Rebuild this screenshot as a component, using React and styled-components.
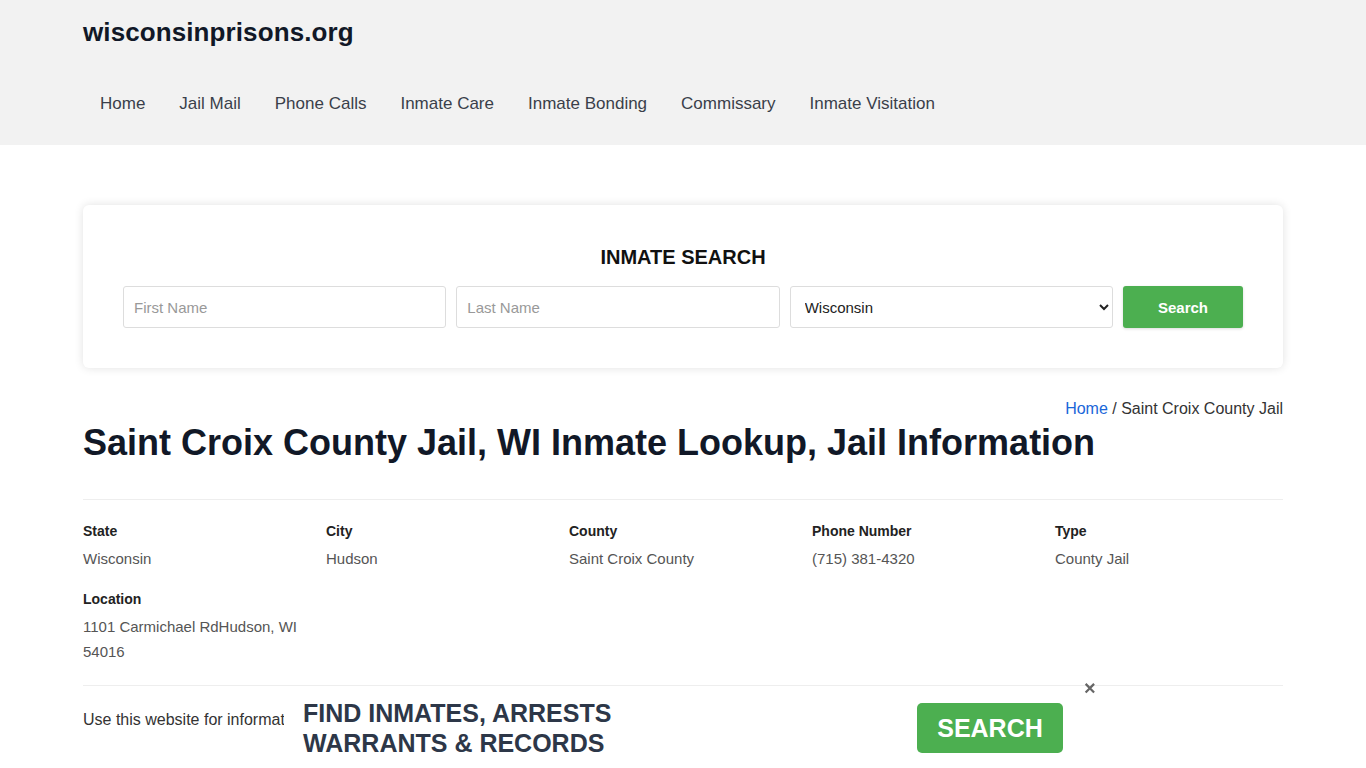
import React from "react";
import styled, { createGlobalStyle } from "styled-components";

const Global = createGlobalStyle`
  * { box-sizing: border-box; }
  body { margin: 0; font-family: "Liberation Sans", Arial, sans-serif; background: #fff; color: #333; }
`;

const Header = styled.header`
  background: #f2f2f2;
  height: 145px;
`;

const Container = styled.div`
  width: 1200px;
  margin: 0 auto;
`;

const Logo = styled.div`
  font-size: 26px;
  font-weight: 700;
  color: #111827;
  padding-top: 17px;
  height: 92px;
  letter-spacing: 0.1px;
`;

const Nav = styled.nav`
  display: flex;
  padding-left: 17px;
  gap: 34px;
`;

const NavLink = styled.a`
  font-size: 17px;
  color: #3a3f4a;
  text-decoration: none;
  line-height: 20px;
  padding-top: 2px;
`;

const Card = styled.section`
  margin-top: 60px;
  background: #fff;
  border-radius: 6px;
  box-shadow: 0 0 10px rgba(0, 0, 0, 0.12);
  padding: 38px 40px 40px;
`;

const CardTitle = styled.h2`
  margin: 0 0 14px;
  text-align: center;
  font-size: 20px;
  font-weight: 700;
  color: #111;
  line-height: 29px;
`;

const Row = styled.div`
  display: flex;
  gap: 10px;
`;

const Input = styled.input`
  flex: 1;
  height: 42px;
  border: 1px solid #ddd;
  border-radius: 3px;
  padding: 0 10px;
  font-family: "Liberation Sans", Arial, sans-serif;
  font-size: 15px;
  color: #333;
  &::placeholder { color: #999; }
`;

const Select = styled.select`
  flex: 1;
  height: 42px;
  border: 1px solid #ddd;
  border-radius: 3px;
  padding: 0 10px;
  font-family: "Liberation Sans", Arial, sans-serif;
  font-size: 15px;
  color: #222;
  background: #fff;
`;

const Button = styled.button`
  width: 120px;
  height: 42px;
  background: #4caf50;
  color: #fff;
  border: none;
  border-radius: 3px;
  font-family: "Liberation Sans", Arial, sans-serif;
  font-weight: 700;
  font-size: 15px;
  box-shadow: 0 1px 3px rgba(0,0,0,0.15);
`;

const Breadcrumb = styled.div`
  margin-top: 32px;
  text-align: right;
  font-size: 16px;
  color: #333;
  line-height: 18px;
`;

const Crumb = styled.a`
  color: #1a66d9;
  text-decoration: none;
`;

const Title = styled.h1`
  margin: 3px 0 0;
  font-size: 36px;
  font-weight: 700;
  color: #111827;
  line-height: 44px;
`;

const Divider = styled.hr`
  border: none;
  border-top: 1px solid #eee;
  margin: ${(p) => p.$mt || 0}px 0 0;
`;

const InfoGrid = styled.div`
  display: grid;
  grid-template-columns: repeat(5, 243px);
  row-gap: 19px;
  padding-top: 22px;
`;

const Cell = styled.div`
  padding-right: 16px;
`;

const Label = styled.div`
  font-size: 14px;
  font-weight: 700;
  color: #222;
  line-height: 18px;
`;

const Value = styled.div`
  margin-top: 6px;
  font-size: 15px;
  color: #555;
  line-height: 25px;
`;

const Text = styled.p`
  margin: 23px 0 0;
  font-size: 16px;
  color: #333;
  line-height: 22px;
`;

const Banner = styled.div`
  position: fixed;
  left: 284px;
  bottom: 0;
  width: 795px;
  height: 72px;
  background: #fff;
  display: flex;
  align-items: center;
  justify-content: space-between;
  padding: 0 16px 0 19px;
`;

const BannerText = styled.div`
  font-size: 25px;
  font-weight: 700;
  color: #2d3748;
  line-height: 30px;
  margin-top: -8px;
`;

const BannerButton = styled.button`
  width: 146px;
  height: 50px;
  background: #4caf50;
  color: #fff;
  border: none;
  border-radius: 5px;
  font-family: "Liberation Sans", Arial, sans-serif;
  font-weight: 700;
  font-size: 25px;
  margin-top: -8px;
`;

const Close = styled.div`
  position: fixed;
  left: 1084px;
  top: 679px;
  font-size: 20px;
  font-weight: 700;
  color: #666;
  line-height: 18px;
`;

const fields = [
  ["State", "Wisconsin"],
  ["City", "Hudson"],
  ["County", "Saint Croix County"],
  ["Phone Number", "(715) 381-4320"],
  ["Type", "County Jail"],
  ["Location", "1101 Carmichael RdHudson, WI 54016"],
];

export default function App() {
  return (
    <>
      <Global />
      <Header>
        <Container>
          <Logo>wisconsinprisons.org</Logo>
          <Nav>
            {["Home", "Jail Mail", "Phone Calls", "Inmate Care", "Inmate Bonding", "Commissary", "Inmate Visitation"].map((n) => (
              <NavLink key={n} href="#">{n}</NavLink>
            ))}
          </Nav>
        </Container>
      </Header>
      <Container>
        <Card>
          <CardTitle>INMATE SEARCH</CardTitle>
          <Row>
            <Input placeholder="First Name" />
            <Input placeholder="Last Name" />
            <Select defaultValue="Wisconsin">
              <option>Wisconsin</option>
            </Select>
            <Button>Search</Button>
          </Row>
        </Card>
        <Breadcrumb>
          <Crumb href="#">Home</Crumb> / Saint Croix County Jail
        </Breadcrumb>
        <Title>Saint Croix County Jail, WI Inmate Lookup, Jail Information</Title>
        <Divider $mt={34} />
        <InfoGrid>
          {fields.map(([l, v]) => (
            <Cell key={l}>
              <Label>{l}</Label>
              <Value>{v}</Value>
            </Cell>
          ))}
        </InfoGrid>
        <Divider $mt={21} />
        <Text>Use this website for informational purposes only. This site is not affiliated with any government agency.</Text>
      </Container>
      <Banner>
        <BannerText>
          FIND INMATES, ARRESTS
          <br />
          WARRANTS &amp; RECORDS
        </BannerText>
        <BannerButton>SEARCH</BannerButton>
      </Banner>
      <Close>×</Close>
    </>
  );
}
